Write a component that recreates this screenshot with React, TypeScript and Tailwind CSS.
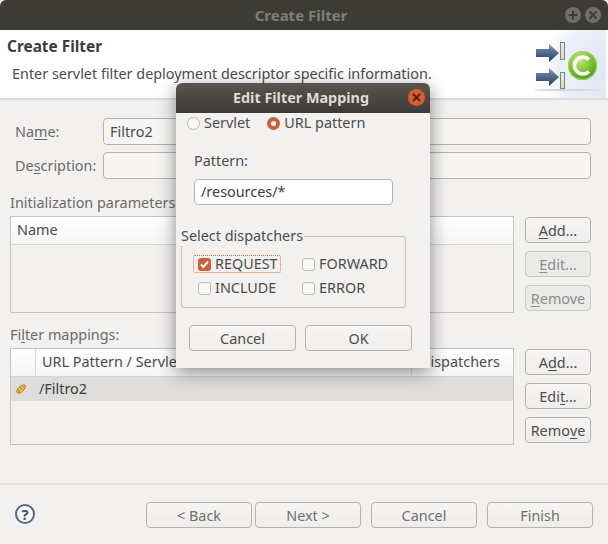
const sans = "font-['Noto_Sans','Open_Sans',sans-serif]";

function Btn({ label, className = "" }: { label: React.ReactNode; className?: string }) {
  return (
    <div
      className={`flex h-[26px] items-center justify-center rounded-[4px] border border-[#b4b3af] bg-gradient-to-b from-[#f6f5f4] to-[#eeedeb] pt-[2px] text-[14.4px] leading-none text-[#4c4c4c] ${className}`}
    >
      {label}
    </div>
  );
}

function SideButtons({ labels, disabled = false }: { labels: [React.ReactNode, React.ReactNode, React.ReactNode]; disabled?: boolean }) {
  return (
    <div className="flex w-[66px] flex-col gap-2 pt-px">
      <Btn label={labels[0]} />
      <Btn label={labels[1]} className={disabled ? "border-[#c8c7c4] bg-none bg-[#eaeae8] text-[#8d8c88]" : ""} />
      <Btn label={labels[2]} className={disabled ? "border-[#c8c7c4] bg-none bg-[#eaeae8] text-[#8d8c88]" : ""} />
    </div>
  );
}

function BannerIcon() {
  return (
    <svg width="75" height="68" viewBox="0 0 75 68" className="absolute left-[2px] top-0">
      <defs>
        <linearGradient id="arrow" x1="0" y1="0" x2="0" y2="1">
          <stop offset="0" stopColor="#7d9cbd" />
          <stop offset="1" stopColor="#22395a" />
        </linearGradient>
        <linearGradient id="bar" x1="0" y1="0" x2="0" y2="1">
          <stop offset="0" stopColor="#dfeeea" />
          <stop offset="1" stopColor="#f0d8a8" />
        </linearGradient>
        <radialGradient id="ball" cx="0.4" cy="0.3" r="0.8">
          <stop offset="0" stopColor="#c4ec82" />
          <stop offset="0.6" stopColor="#72bb2a" />
          <stop offset="1" stopColor="#3f8c12" />
        </radialGradient>
      </defs>
      <path d="M3 19h13v-5l10 9-10 9v-5H3z" fill="url(#arrow)" />
      <path d="M3 43h13v-5l10 9-10 9v-5H3z" fill="url(#arrow)" />
      <rect x="27.5" y="12.5" width="4" height="17" fill="url(#bar)" stroke="#6f8a8c" />
      <rect x="27.5" y="42.5" width="4" height="16" fill="url(#bar)" stroke="#6f8a8c" />
      <circle cx="49.5" cy="35.5" r="14.5" fill="url(#ball)" />
      <circle cx="49.5" cy="35.5" r="14" fill="none" stroke="#a6dc60" strokeWidth="1" />
      <path d="M56 29.5a8.5 8.5 0 1 0 0 12" fill="none" stroke="#ffffff" strokeWidth="3.6" />
      <ellipse cx="34" cy="60" rx="33" ry="1" fill="#d8d4da" />
    </svg>
  );
}

function Checkbox({ checked = false }: { checked?: boolean }) {
  return checked ? (
    <span className="flex h-[13px] w-[13px] items-center justify-center rounded-[3px] bg-[#c9623a]">
      <svg width="11" height="11" viewBox="0 0 11 11">
        <path d="M2 5.5l2.4 2.6L9 2.5" fill="none" stroke="#fff" strokeWidth="2" />
      </svg>
    </span>
  ) : (
    <span className="h-[13px] w-[13px] rounded-[3px] border border-[#bdbcb8] bg-[#f7f7f6]" />
  );
}

function EditFilterMapping() {
  return (
    <div className="absolute left-[176px] top-[83px] h-[285px] w-[254px] overflow-hidden rounded-t-[6px] bg-[#f2f1f0] shadow-[0_4px_18px_rgba(0,0,0,0.45)]">
      <div className="relative flex h-[30px] items-center justify-center bg-gradient-to-b from-[#5a564e] to-[#3c3b37] pr-[4px] text-[14.4px] font-bold text-[#dfdbd2]">
        Edit Filter Mapping
        <span className="absolute right-[5px] top-[6px] flex h-[17px] w-[17px] items-center justify-center rounded-full bg-[#dd5a2b]">
          <svg width="9" height="9" viewBox="0 0 9 9">
            <path d="M1 1l7 7M8 1l-7 7" stroke="#3a2a20" strokeWidth="2" />
          </svg>
        </span>
      </div>
      <div className="flex h-[20px] items-center pl-[11px] text-[14.4px] text-[#4c4c4c]">
        <span className="h-[13px] w-[13px] rounded-full border border-[#bdbcb8] bg-[#f7f7f6]" />
        <span className="ml-[4px]">Servlet</span>
        <span className="ml-[17px] flex h-[13px] w-[13px] items-center justify-center rounded-full bg-[#c9623a]">
          <span className="h-[5px] w-[5px] rounded-full bg-white" />
        </span>
        <span className="ml-[4px]">URL pattern</span>
      </div>
      <div className="ml-[18px] mt-[18px] text-[14.4px] leading-[20px] text-[#4c4c4c]">Pattern:</div>
      <div className="ml-[18px] mt-[8px] flex h-[26px] w-[199px] items-center rounded-[4px] border border-[#b4b3af] bg-white pb-px pl-[6px] text-[14.4px] text-[#3c3c3c]">
        /resources/*
      </div>
      <div className="relative ml-[5px] mt-[31px] h-[72px] w-[225px] rounded-[3px] border border-[#c4c3bf]">
        <span className="absolute -left-px -top-[11px] bg-[#f2f1f0] pr-px text-[14.4px] leading-[20px] text-[#4c4c4c]">Select dispatchers</span>
        <div className="grid grid-cols-[104px_1fr] gap-y-[6px] pl-[16px] pt-[18px] text-[14.4px] leading-[18px] text-[#4c4c4c]">
          <div className="relative flex items-center gap-[4px]">
            <span className="absolute -left-[5px] top-0 h-[18px] w-[88px] rounded-[2px] border border-dotted border-[#e0703c]" />
            <Checkbox checked />
            REQUEST
          </div>
          <div className="flex items-center gap-[4px]">
            <Checkbox />
            FORWARD
          </div>
          <div className="flex items-center gap-[4px]">
            <Checkbox />
            INCLUDE
          </div>
          <div className="flex items-center gap-[4px]">
            <Checkbox />
            ERROR
          </div>
        </div>
      </div>
      <div className="ml-[13px] mt-[17px] flex gap-[9px]">
        <Btn label="Cancel" className="w-[107px]" />
        <Btn label="OK" className="w-[107px]" />
      </div>
    </div>
  );
}

export default function App() {
  return (
    <div className={`relative flex h-[544px] w-[608px] flex-col overflow-hidden bg-[#f2f1f0] ${sans}`}>
      {/* title bar */}
      <div className="relative flex h-[30px] items-center justify-center rounded-t-[6px] bg-[#3d3b36] pr-[6px] text-[15px] font-bold text-[#7f7e79]">
        Create Filter
        <span className="absolute left-[565px] top-[7px] flex h-[16px] w-[16px] items-center justify-center rounded-full bg-[#6f6e69]">
          <svg width="10" height="10" viewBox="0 0 10 10">
            <path d="M5 0.5v9M0.5 5h9" stroke="#3d3b36" strokeWidth="2" />
          </svg>
        </span>
        <span className="absolute left-[585px] top-[7px] flex h-[16px] w-[16px] items-center justify-center rounded-full bg-[#6f6e69]">
          <svg width="10" height="10" viewBox="0 0 10 10">
            <path d="M1.5 1.5l7 7M8.5 1.5l-7 7" stroke="#3d3b36" strokeWidth="2" />
          </svg>
        </span>
      </div>

      {/* banner */}
      <div className="relative h-[70px] border-b-2 border-[#dddcda] bg-white">
        <div className="pl-[7px] pt-[7px] text-[15.4px] font-bold leading-[20px] text-[#3c3c3c]">Create Filter</div>
        <div className="pl-[12px] pt-[7px] text-[14.4px] leading-[20px] text-[#4c4c4c]">
          Enter servlet filter deployment descriptor specific information.
        </div>
        <div className="absolute right-[2px] top-0 h-[68px] w-[75px] bg-[radial-gradient(circle_at_100%_60%,#dfe5f4_0%,#eef0f9_55%,#ffffff_75%)]">
          <BannerIcon />
        </div>
      </div>

      {/* form */}
      <div className="flex-1 pl-[10px] pr-[17px] text-[14.4px] text-[#4c4c4c]">
        <div className="mt-[18px] flex h-[27px] items-center">
          <span className="w-[93px] pl-[5px] text-[#6a6a66]">
            Na<u className="underline-offset-2">m</u>e:
          </span>
          <div className="flex h-[27px] flex-1 items-center rounded-[4px] border border-[#b4b3af] bg-[#f6f5f4] pl-[6px]">Filtro2</div>
        </div>
        <div className="mt-[7px] flex h-[27px] items-center">
          <span className="w-[93px] pl-[5px] text-[#6a6a66]">
            De<u className="underline-offset-2">s</u>cription:
          </span>
          <div className="h-[27px] flex-1 rounded-[4px] border border-[#b4b3af] bg-[#f6f5f4]" />
        </div>

        <div className="mt-[14px] h-[20px] leading-[20px] text-[#6a6a66]">Initialization parameters:</div>
        <div className="mt-[3px] flex justify-between">
          <div className="h-[97px] w-[504px] border border-[#c4c3bf]">
            <div className="flex h-[28px] items-center border-b border-[#d4d3cf] bg-gradient-to-b from-white to-[#f6f5f4] pb-[2px] pl-[6px]">Name</div>
          </div>
          <SideButtons
            disabled
            labels={[
              <><u className="underline-offset-2">A</u>dd...</>,
              <><u className="underline-offset-2">E</u>dit...</>,
              <><u className="underline-offset-2">R</u>emove</>,
            ]}
          />
        </div>

        <div className="mt-[12px] h-[20px] leading-[20px] text-[#6a6a66]">
          Fi<u className="underline-offset-2">l</u>ter mappings:
        </div>
        <div className="mt-[3px] flex justify-between">
          <div className="h-[97px] w-[504px] border border-[#c4c3bf]">
            <div className="flex h-[28px] border-b border-[#d4d3cf] bg-gradient-to-b from-white to-[#f6f5f4]">
              <div className="w-[25px] border-r border-[#dddcda]" />
              <div className="flex w-[376px] items-center border-r border-[#dddcda] pb-[2px] pl-[6px]">URL Pattern / Servlet Name</div>
              <div className="flex items-center pb-[2px] pl-[8px]">Dispatchers</div>
            </div>
            <div className="flex h-[24px] items-center bg-[#dedddb]">
              <svg width="12" height="12" viewBox="0 0 12 12" className="ml-[4px]">
                <path d="M1.5 8.5C3 4 7 1.5 10 2c1.2.8-.5 5-3.5 7.2C4.5 10.5 2.5 10.5 1.5 8.5z" fill="#e8c85a" stroke="#a8740f" />
                <path d="M3 9l6-6M2.5 6l3 3.5M5 3.5l3 3.5" stroke="#a8740f" strokeWidth="0.6" />
              </svg>
              <span className="ml-[12px] text-[#3c3c3c]">/Filtro2</span>
            </div>
          </div>
          <SideButtons
            labels={[
              <>A<u className="underline-offset-2">d</u>d...</>,
              <>Edi<u className="underline-offset-2">t</u>...</>,
              <>Remo<u className="underline-offset-2">v</u>e</>,
            ]}
          />
        </div>
      </div>

      {/* footer */}
      <div className="relative flex h-[61px] items-start border-t-2 border-[#e4e3e1] pt-[17px]">
        <span className="ml-[15px] mt-[2px] flex h-[20px] w-[20px] items-center justify-center rounded-full border-2 border-[#56698f] bg-[#f7f7f8] text-[15px] font-bold leading-none text-[#3f5480]">
          ?
        </span>
        <div className="ml-[111px] flex gap-[3px]">
          <Btn label="< Back" className="w-[106px] text-[#6f6f6b]" />
          <Btn label="Next >" className="w-[106px] text-[#6f6f6b]" />
        </div>
        <Btn label="Cancel" className="ml-[10px] w-[106px] text-[#6f6f6b]" />
        <Btn label="Finish" className="ml-[10px] w-[106px] text-[#6f6f6b]" />
      </div>

      <EditFilterMapping />
    </div>
  );
}
